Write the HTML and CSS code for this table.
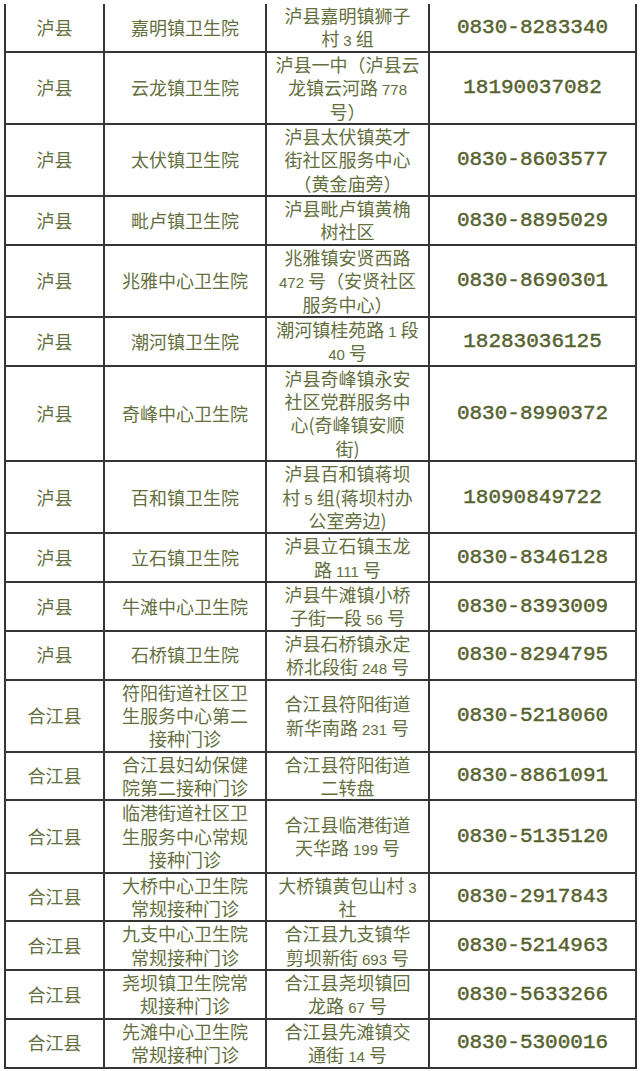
FILE: index.html
```html
<!DOCTYPE html>
<html lang="zh-CN">
<head>
<meta charset="utf-8">
<title>接种门诊</title>
<link rel="stylesheet" href="styles.css">
</head>
<body>
<table class="grid">
<colgroup><col class="c1"><col class="c2"><col class="c3"><col class="c4"></colgroup>
<tbody>
<tr><td>泸县</td><td>嘉明镇卫生院</td><td>泸县嘉明镇狮子<br>村 <span class="n">3</span> 组</td><td class="tel">0830-8283340</td></tr>
<tr><td>泸县</td><td>云龙镇卫生院</td><td>泸县一中（泸县云<br>龙镇云河路 <span class="n">778</span><br>号）</td><td class="tel">18190037082</td></tr>
<tr><td>泸县</td><td>太伏镇卫生院</td><td>泸县太伏镇英才<br>街社区服务中心<br>（黄金庙旁）</td><td class="tel">0830-8603577</td></tr>
<tr><td>泸县</td><td>毗卢镇卫生院</td><td>泸县毗卢镇黄桷<br>树社区</td><td class="tel">0830-8895029</td></tr>
<tr><td>泸县</td><td>兆雅中心卫生院</td><td>兆雅镇安贤西路<br><span class="n">472</span> 号（安贤社区<br>服务中心）</td><td class="tel">0830-8690301</td></tr>
<tr><td>泸县</td><td>潮河镇卫生院</td><td>潮河镇桂苑路 <span class="n">1</span> 段<br><span class="n">40</span> 号</td><td class="tel">18283036125</td></tr>
<tr><td>泸县</td><td>奇峰中心卫生院</td><td>泸县奇峰镇永安<br>社区党群服务中<br>心(奇峰镇安顺<br>街)</td><td class="tel">0830-8990372</td></tr>
<tr><td>泸县</td><td>百和镇卫生院</td><td>泸县百和镇蒋坝<br>村 <span class="n">5</span> 组(蒋坝村办<br>公室旁边)</td><td class="tel">18090849722</td></tr>
<tr><td>泸县</td><td>立石镇卫生院</td><td>泸县立石镇玉龙<br>路 <span class="n">111</span> 号</td><td class="tel">0830-8346128</td></tr>
<tr><td>泸县</td><td>牛滩中心卫生院</td><td>泸县牛滩镇小桥<br>子街一段 <span class="n">56</span> 号</td><td class="tel">0830-8393009</td></tr>
<tr><td>泸县</td><td>石桥镇卫生院</td><td>泸县石桥镇永定<br>桥北段街 <span class="n">248</span> 号</td><td class="tel">0830-8294795</td></tr>
<tr><td>合江县</td><td>符阳街道社区卫<br>生服务中心第二<br>接种门诊</td><td>合江县符阳街道<br>新华南路 <span class="n">231</span> 号</td><td class="tel">0830-5218060</td></tr>
<tr><td>合江县</td><td>合江县妇幼保健<br>院第二接种门诊</td><td>合江县符阳街道<br>二转盘</td><td class="tel">0830-8861091</td></tr>
<tr><td>合江县</td><td>临港街道社区卫<br>生服务中心常规<br>接种门诊</td><td>合江县临港街道<br>天华路 <span class="n">199</span> 号</td><td class="tel">0830-5135120</td></tr>
<tr><td>合江县</td><td>大桥中心卫生院<br>常规接种门诊</td><td>大桥镇黄包山村 <span class="n">3</span><br>社</td><td class="tel">0830-2917843</td></tr>
<tr><td>合江县</td><td>九支中心卫生院<br>常规接种门诊</td><td>合江县九支镇华<br>剪坝新街 <span class="n">693</span> 号</td><td class="tel">0830-5214963</td></tr>
<tr><td>合江县</td><td>尧坝镇卫生院常<br>规接种门诊</td><td>合江县尧坝镇回<br>龙路 <span class="n">67</span> 号</td><td class="tel">0830-5633266</td></tr>
<tr><td>合江县</td><td>先滩中心卫生院<br>常规接种门诊</td><td>合江县先滩镇交<br>通街 <span class="n">14</span> 号</td><td class="tel">0830-5300016</td></tr>
</tbody>
</table>
</body>
</html>
```

FILE: styles.css
```css
html, body {
  margin: 0;
  padding: 0;
  background: #ffffff;
}

.grid {
  margin: 4px 0 0 4px;
  width: 631px;
  table-layout: fixed;
  border-collapse: collapse;
  font-family: "Noto Sans CJK SC", "Liberation Sans", sans-serif;
  font-size: 18px;
  line-height: 23.38px;
  color: #646f3e;
}

.c1 { width: 99px; }
.c2 { width: 162px; }
.c3 { width: 163px; }
.c4 { width: 207px; }

.grid td {
  border: 2px solid #353535;
  padding: 0;
  text-align: center;
  vertical-align: middle;
  white-space: nowrap;
}

.grid tr:first-child td {
  border-top: none;
}

.n {
  font-family: "Liberation Sans", sans-serif;
  font-size: 15px;
  line-height: 0;
}

.grid td.tel {
  font-family: "Liberation Mono", monospace;
  font-size: 21px;
  font-weight: normal;
  -webkit-text-stroke: 0.45px #56622e;
  color: #56622e;
}
```
